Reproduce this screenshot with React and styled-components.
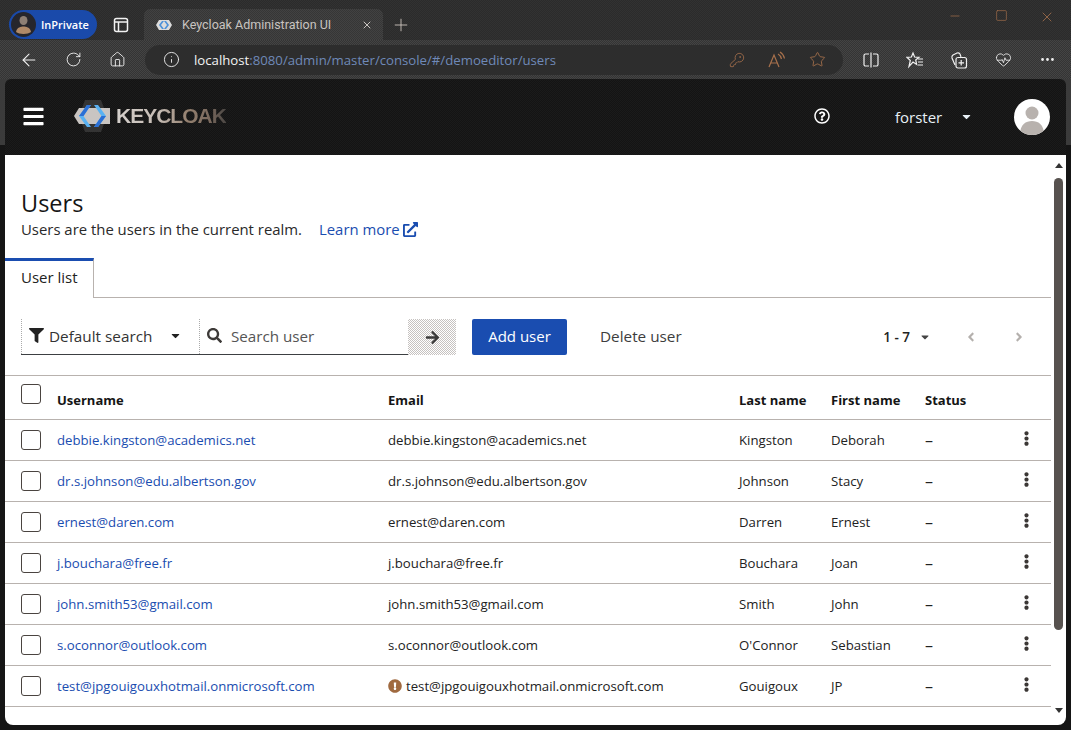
import React from "react";
import styled, { createGlobalStyle, css } from "styled-components";
import {
  FaBars,
  FaCaretDown,
  FaFilter,
  FaSearch,
  FaArrowRight,
  FaAngleLeft,
  FaAngleRight,
  FaEllipsisV,
  FaExclamationCircle,
  FaExternalLinkAlt,
  FaRegQuestionCircle,
} from "react-icons/fa";
import { ArrowLeft, RotateCw, Home, Info, KeyRound, Star, HeartPulse, Minus, Square, X, Plus, Ellipsis } from "lucide-react";

const GlobalStyle = createGlobalStyle`
  html, body {
    margin: 0;
    padding: 0;
    background: #2c2c2c;
    overflow: hidden;
  }
  * { box-sizing: border-box; }
`;

const PAGE_FONT = `"Open Sans", "Noto Sans", sans-serif`;
const BLUE = "#1a4db0";
const LINE = "#b8b2ae";

// the screenshot is dithered, the chrome shows it the most
const dither = (a, b) => css`
  background-color: ${a};
  background-image: repeating-conic-gradient(${a} 0 25%, ${b} 0 50%);
  background-size: 2px 2px;
`;

// browser chrome
const Window = styled.div`
  width: 1071px;
  height: 730px;
  display: flex;
  flex-direction: column;
  background: #151515;
  font-family: ${PAGE_FONT};
`;
const TabStrip = styled.div`
  height: 40px;
  flex: none;
  display: flex;
  align-items: flex-end;
  ${dither("#2b2b2b", "#323232")}
  padding-left: 9px;
`;
const InPrivate = styled.div`
  width: 88px;
  height: 29px;
  margin-bottom: 1px;
  border-radius: 15px;
  background: #1a4aaa;
  color: #fff;
  display: flex;
  align-items: center;
  gap: 5px;
  padding-left: 2px;
  font-size: 11px;
  font-weight: 600;
`;
const TabToggle = styled.div`
  width: 47px;
  height: 40px;
  padding-top: 10px;
  display: flex;
  align-items: center;
  justify-content: center;
  color: #f2f2f2;
`;
const Tab = styled.div`
  width: 239px;
  height: 31px;
  ${dither("#363636", "#424242")}
  border-radius: 6px 6px 0 0;
  display: flex;
  align-items: center;
  padding: 0 10px 0 12px;
  color: #c9c4c0;
  font-family: Roboto, sans-serif;
  font-size: 12.5px;
`;
const TabTitle = styled.span`
  flex: 1;
  margin-left: 10px;
  white-space: nowrap;
`;
const NewTab = styled.div`
  width: 36px;
  height: 40px;
  padding-top: 10px;
  display: flex;
  align-items: center;
  justify-content: center;
  color: #d8cfc8;
`;
const WindowControls = styled.div`
  margin-left: auto;
  margin-right: 1px;
  height: 40px;
  display: flex;
  align-items: flex-start;
  padding-top: 9px;
  color: #a8714c;
`;
const WindowControl = styled.div`
  width: 46px;
  display: flex;
  justify-content: center;
`;
const Toolbar = styled.div`
  height: 39px;
  flex: none;
  display: flex;
  align-items: center;
  ${dither("#343434", "#444444")}
  color: #f0f0f0;
  padding-left: 7px;
`;
const NavButton = styled.div`
  width: 44px;
  height: 39px;
  display: flex;
  align-items: center;
  justify-content: center;
  color: ${(p) => p.$color || "#f0f0f0"};
`;
const AddressBar = styled.div`
  width: 698px;
  height: 30px;
  border-radius: 15px;
  background: #2d2d2d;
  margin-left: 6px;
  margin-right: 6px;
  display: flex;
  align-items: center;
  padding: 0 6px 0 18px;
  font-size: 13.2px;
`;
const Url = styled.div`
  flex: 1;
  margin-left: 14px;
  color: #6f89b8;
`;
const Host = styled.span`
  color: #f3f3f3;
`;
const AddressIcon = styled.div`
  width: 40px;
  display: flex;
  justify-content: center;
  color: #a8714c;
`;

// keycloak masthead
const MastheadWell = styled.div`
  flex: none;
  padding: 0 5px;
  background: linear-gradient(#3b3b3b 0 66px, #151515 66px);
`;
const Masthead = styled.header`
  height: 76px;
  ${dither("#141414", "#1b1b1b")}
  border-radius: 6px 6px 0 0;
  display: flex;
  align-items: center;
  color: #fff;
`;
const Burger = styled.div`
  width: 68px;
  padding-left: 17px;
  font-size: 23px;
  display: flex;
  margin-top: -2px;
`;
const Logo = styled.div`
  display: flex;
  align-items: center;
  width: 739px;
  margin-top: -3px;
`;
const LogoWord = styled.span`
  margin-left: 5px;
  font-family: "Liberation Sans", sans-serif;
  font-weight: 700;
  font-size: 21px;
  letter-spacing: -1px;
  background: linear-gradient(90deg, #d5d0cc 0%, #c4bab2 40%, #94806f 65%, #7b6a5e 85%, #4a4643 100%);
  -webkit-background-clip: text;
  background-clip: text;
  color: transparent;
`;
const Help = styled.div`
  width: 83px;
  font-size: 16px;
  display: flex;
  padding-left: 2px;
  margin-top: -2px;
`;
const UserMenu = styled.div`
  width: 114px;
  display: flex;
  align-items: center;
  font-size: 15px;
  color: #e8f0f6;
  margin-top: -1px;
`;
const UserName = styled.span`
  width: 65px;
`;
const Avatar = styled.div`
  width: 36px;
  height: 36px;
  border-radius: 50%;
  background: #fff;
  overflow: hidden;
  margin-left: 5px;
`;

// page body
const Main = styled.main`
  flex: none;
  height: 570px;
  margin: 0 5px;
  background: #fff;
  border-radius: 0 0 8px 8px;
  display: flex;
  overflow: hidden;
`;
const Content = styled.div`
  flex: 1;
  min-width: 0;
`;
const ScrollTrack = styled.div`
  width: 15px;
  display: flex;
  flex-direction: column;
  align-items: center;
  padding-top: 8px;
  color: #333;
`;
const ScrollArrow = styled.div`
  width: 0;
  height: 0;
  border-left: 4px solid transparent;
  border-right: 4px solid transparent;
  ${(p) => (p.$down ? "border-top: 5px solid #333;" : "border-bottom: 5px solid #333;")}
  ${(p) => p.$down && "margin-top: 78px;"}
`;
const ScrollThumb = styled.div`
  width: 9px;
  height: 452px;
  margin-top: 10px;
  border-radius: 5px;
  background: #57524f;
`;
const PageHead = styled.section`
  padding: 34px 16px 0;
`;
const Title = styled.h1`
  margin: 0;
  font-size: 23.5px;
  line-height: 28px;
  font-weight: 400;
  color: #151515;
`;
const Subtitle = styled.p`
  margin: 1px 0 0;
  font-size: 14.9px;
  line-height: 22px;
  color: #2a2a2a;
  display: flex;
  align-items: center;
`;
const LearnMore = styled.a`
  color: ${BLUE};
  margin-left: 17px;
  display: inline-flex;
  align-items: center;
  gap: 3px;
`;
const TabRow = styled.div`
  margin-top: 18px;
  height: 40px;
  border-bottom: 1px solid ${LINE};
  display: flex;
`;
const ActiveTab = styled.div`
  width: 89px;
  height: 40px;
  border-top: 3px solid ${BLUE};
  border-right: 1px solid ${LINE};
  background: #fff;
  padding-left: 16px;
  font-size: 15px;
  line-height: 32px;
  color: #222;
`;
const Filters = styled.div`
  height: 77px;
  padding: 21px 8px 0 16px;
  display: flex;
  align-items: flex-start;
`;
const SearchGroup = styled.div`
  width: 387px;
  height: 36px;
  display: flex;
  border-bottom: 1px solid #3c3f42;
`;
const FilterSelect = styled.div`
  width: 179px;
  border-left: 1px dotted #aaa;
  border-right: 1px dotted #aaa;
  padding: 0 17px 2px 7px;
  display: flex;
  align-items: center;
  font-size: 15.3px;
  color: #333;
  gap: 5px;
`;
const Grow = styled.span`
  flex: 1;
`;
const SearchField = styled.div`
  flex: 1;
  display: flex;
  align-items: center;
  gap: 9px;
  padding: 0 0 2px 7px;
  font-size: 15.2px;
  color: #555;
`;
const GoButton = styled.div`
  width: 48px;
  height: 36px;
  display: flex;
  align-items: center;
  justify-content: center;
  color: #3a3a3a;
  font-size: 15px;
  ${dither("#c6c2c0", "#ffffff")}
`;
const PrimaryButton = styled.button`
  width: 95px;
  height: 36px;
  margin-left: 16px;
  padding: 0 0 2px;
  border: 0;
  border-radius: 2px;
  background: ${BLUE};
  color: #fff;
  font: 15px ${PAGE_FONT};
`;
const LinkButton = styled.button`
  margin-left: 33px;
  height: 36px;
  border: 0;
  padding: 0 0 2px;
  background: none;
  color: #3d3d3d;
  font: 15.3px ${PAGE_FONT};
`;
const Pager = styled.div`
  margin-left: auto;
  height: 36px;
  display: flex;
  align-items: center;
  font-size: 13.5px;
  font-weight: 600;
  color: #222;
`;
const PagerCount = styled.div`
  display: flex;
  align-items: center;
  gap: 9px;
  margin-right: 16px;
  & svg { color: #444; font-size: 12px; }
`;
const PagerArrow = styled.div`
  width: 48px;
  display: flex;
  justify-content: center;
  color: #b4b0ad;
  font-size: 14px;
`;

// users table
const Grid = styled.div`
  display: grid;
  grid-template-columns: 36px 331px 351px 92px 94px 1fr 44px;
  align-items: center;
  padding-left: 16px;
  border-top: 1px solid ${LINE};
`;
const HeadRow = styled(Grid)`
  height: 44px;
  padding-top: 4px;
  font-size: 13px;
  font-weight: 700;
  color: #151515;
`;
const Row = styled(Grid)`
  height: 41px;
  font-size: 13.2px;
  color: #222;
  &:last-child {
    border-bottom: 1px solid ${LINE};
    height: 42px;
  }
`;
const Check = styled.div`
  width: 20px;
  height: 20px;
  border: 1px solid #4a4440;
  border-radius: 3px;
  background: #fff;
  ${(p) => p.$head && "margin-top: -11px;"}
`;
const UserLink = styled.a`
  color: ${BLUE};
`;
const EmailCell = styled.span`
  display: flex;
  align-items: center;
  gap: 4px;
  & svg { color: #a06a40; font-size: 14px; }
`;
const Dash = styled.span`
  font-size: 16px;
`;
const Kebab = styled.div`
  display: flex;
  font-size: 15px;
  color: #3b3735;
  padding-left: 12px;
  margin-top: -3px;
`;
const Table = styled.div`
  margin: 0;
`;

const USERS = [
  { username: "debbie.kingston@academics.net", last: "Kingston", first: "Deborah" },
  { username: "dr.s.johnson@edu.albertson.gov", last: "Johnson", first: "Stacy" },
  { username: "ernest@daren.com", last: "Darren", first: "Ernest" },
  { username: "j.bouchara@free.fr", last: "Bouchara", first: "Joan" },
  { username: "john.smith53@gmail.com", last: "Smith", first: "John" },
  { username: "s.oconnor@outlook.com", last: "O'Connor", first: "Sebastian" },
  { username: "test@jpgouigouxhotmail.onmicrosoft.com", last: "Gouigoux", first: "JP", warn: true },
];

function LogoMark() {
  return (
    <svg width="38" height="34" viewBox="0 0 38 34">
      <path d="M6 17 L12 1 H28 L34 17 L28 33 H12 Z" fill="#343434" />
      <path d="M1 17 L6 9 H37 V25 H6 Z" fill="#c9c5c2" />
      <path d="M14 6 L6 17 L14 28 H18 L10.5 17 L18 6 Z" fill="#5ab2f2" />
      <path d="M21 6 L28.5 17 L21 28 H25 L33 17 L25 6 Z" fill="#5ab2f2" />
      <path d="M14 6 L6 17 H10.5 L18 6 Z M21 28 L28.5 17 H33 L25 28 Z" fill="#2b6fd4" />
    </svg>
  );
}

function TabFavicon() {
  return (
    <svg width="16" height="12" viewBox="0 0 16 12">
      <path d="M0 6 L3 1 H13 L16 6 L13 11 H3 Z" fill="#dcdcdc" />
      <path d="M6 2 L3 6 L6 10 H8 L5 6 L8 2 Z M10 2 L13 6 L10 10 H8 L11 6 L8 2 Z" fill="#4a90d9" />
    </svg>
  );
}

function Portrait() {
  return (
    <svg width="25" height="25" viewBox="0 0 25 25">
      <circle cx="12.5" cy="12.5" r="12.5" fill="#26262c" />
      <ellipse cx="12.5" cy="8.5" rx="4" ry="4.5" fill="#8d7f74" />
      <path d="M5 20 C6 15 10 14.5 12.5 14.5 C15 14.5 19 15 20 20 C17 22.5 8 22.5 5 20 Z" fill="#b08a68" />
    </svg>
  );
}

function TabsIcon() {
  return (
    <svg width="16" height="16" viewBox="0 0 16 16" fill="none" stroke="currentColor" strokeWidth="1.5">
      <rect x="1.5" y="1.5" width="13" height="13" rx="2" />
      <path d="M1.5 5 H14.5 M5.5 5 V14.5" />
    </svg>
  );
}

function ReadAloudIcon() {
  return (
    <svg width="18" height="18" viewBox="0 0 18 18" fill="none" stroke="currentColor" strokeWidth="1.2">
      <path d="M1 16 L6 4 L11 16 M3 12 H9" />
      <path d="M10 3 C12 4 13 6 13.5 8 M12 1 C14.5 2.5 16 5 16.5 7.5" />
    </svg>
  );
}

function SplitIcon() {
  return (
    <svg width="16" height="16" viewBox="0 0 16 16" fill="none" stroke="currentColor" strokeWidth="1.2">
      <path d="M6 2 H2.5 A1.5 1.5 0 0 0 1 3.5 V12.5 A1.5 1.5 0 0 0 2.5 14 H6 M10 2 H13.5 A1.5 1.5 0 0 1 15 3.5 V12.5 A1.5 1.5 0 0 1 13.5 14 H10 M8 0.5 V15.5" />
    </svg>
  );
}

function FavoritesIcon() {
  return (
    <svg width="18" height="18" viewBox="0 0 18 18" fill="none" stroke="currentColor" strokeWidth="1.2">
      <path d="M7 2 L8.6 6 L13 6.3 L9.7 9 L10.7 13.5 L7 11 L3 15.5 L4.3 9.5 L1 6.3 L5.4 6 Z" />
      <path d="M12 8 H17 M12 11 H17 M12 14 H17" />
    </svg>
  );
}

function CollectionsIcon() {
  return (
    <svg width="18" height="18" viewBox="0 0 18 18" fill="none" stroke="currentColor" strokeWidth="1.2">
      <path d="M5 14 L2 7 Q1.5 5 3 4 L7 2 Q9 1.5 10 3 L11 6" />
      <rect x="6" y="6.5" width="10.5" height="10.5" rx="2" />
      <path d="M11.2 9 V14.5 M8.5 11.8 H14" />
    </svg>
  );
}

function AvatarArt() {
  return (
    <svg width="36" height="36" viewBox="0 0 36 36">
      <circle cx="18" cy="14" r="6.5" fill="#b8b2ae" />
      <path d="M6 36 C6 25 12 22 18 22 C24 22 30 25 30 36 Z" fill="#b8b2ae" />
    </svg>
  );
}

export default function App() {
  return (
    <Window>
      <GlobalStyle />
      <TabStrip>
        <InPrivate>
          <Portrait />
          InPrivate
        </InPrivate>
        <TabToggle>
          <TabsIcon />
        </TabToggle>
        <Tab>
          <TabFavicon />
          <TabTitle>Keycloak Administration UI</TabTitle>
          <X size={12} />
        </Tab>
        <NewTab>
          <Plus size={20} strokeWidth={1} />
        </NewTab>
        <WindowControls>
          <WindowControl>
            <Minus size={14} strokeWidth={1.2} />
          </WindowControl>
          <WindowControl>
            <Square size={13} strokeWidth={1.2} />
          </WindowControl>
          <WindowControl>
            <X size={16} strokeWidth={1.2} />
          </WindowControl>
        </WindowControls>
      </TabStrip>
      <Toolbar>
        <NavButton>
          <ArrowLeft size={20} strokeWidth={1.3} />
        </NavButton>
        <NavButton>
          <RotateCw size={17} strokeWidth={1.3} />
        </NavButton>
        <NavButton>
          <Home size={17} strokeWidth={1.3} />
        </NavButton>
        <AddressBar>
          <Info size={17} strokeWidth={1.3} color="#eee" />
          <Url>
            <Host>localhost</Host>:8080/admin/master/console/#/demoeditor/users
          </Url>
          <AddressIcon>
            <KeyRound size={16} strokeWidth={1.2} />
          </AddressIcon>
          <AddressIcon>
            <ReadAloudIcon />
          </AddressIcon>
          <AddressIcon>
            <Star size={17} strokeWidth={1.2} />
          </AddressIcon>
        </AddressBar>
        <NavButton>
          <SplitIcon />
        </NavButton>
        <NavButton>
          <FavoritesIcon />
        </NavButton>
        <NavButton>
          <CollectionsIcon />
        </NavButton>
        <NavButton>
          <HeartPulse size={17} strokeWidth={1.2} />
        </NavButton>
        <NavButton>
          <Ellipsis size={17} />
        </NavButton>
      </Toolbar>
      <MastheadWell>
        <Masthead>
          <Burger>
            <FaBars />
          </Burger>
          <Logo>
            <LogoMark />
            <LogoWord>KEYCLOAK</LogoWord>
          </Logo>
          <Help>
            <FaRegQuestionCircle />
          </Help>
          <UserMenu>
            <UserName>forster</UserName>
            <FaCaretDown size={13} />
          </UserMenu>
          <Avatar>
            <AvatarArt />
          </Avatar>
        </Masthead>
      </MastheadWell>
      <Main>
        <Content>
          <PageHead>
            <Title>Users</Title>
            <Subtitle>
              Users are the users in the current realm.
              <LearnMore>
                Learn more <FaExternalLinkAlt size={15} />
              </LearnMore>
            </Subtitle>
          </PageHead>
          <TabRow>
            <ActiveTab>User list</ActiveTab>
          </TabRow>
          <Filters>
            <SearchGroup>
              <FilterSelect>
                <FaFilter size={15} color="#222" />
                <Grow>Default search</Grow>
                <FaCaretDown size={13} color="#222" />
              </FilterSelect>
              <SearchField>
                <FaSearch size={15} color="#3d3a38" />
                Search user
              </SearchField>
            </SearchGroup>
            <GoButton>
              <FaArrowRight />
            </GoButton>
            <PrimaryButton>Add user</PrimaryButton>
            <LinkButton>Delete user</LinkButton>
            <Pager>
              <PagerCount>
                1 - 7 <FaCaretDown />
              </PagerCount>
              <PagerArrow>
                <FaAngleLeft />
              </PagerArrow>
              <PagerArrow>
                <FaAngleRight />
              </PagerArrow>
            </Pager>
          </Filters>
          <Table>
            <HeadRow>
              <Check $head />
              <span>Username</span>
              <span>Email</span>
              <span>Last name</span>
              <span>First name</span>
              <span>Status</span>
              <span />
            </HeadRow>
            {USERS.map((u) => (
              <Row key={u.username}>
                <Check />
                <UserLink>{u.username}</UserLink>
                <EmailCell>
                  {u.warn && <FaExclamationCircle />}
                  {u.username}
                </EmailCell>
                <span>{u.last}</span>
                <span>{u.first}</span>
                <Dash>–</Dash>
                <Kebab>
                  <FaEllipsisV />
                </Kebab>
              </Row>
            ))}
          </Table>
        </Content>
        <ScrollTrack>
          <ScrollArrow />
          <ScrollThumb />
          <ScrollArrow $down />
        </ScrollTrack>
      </Main>
    </Window>
  );
}
